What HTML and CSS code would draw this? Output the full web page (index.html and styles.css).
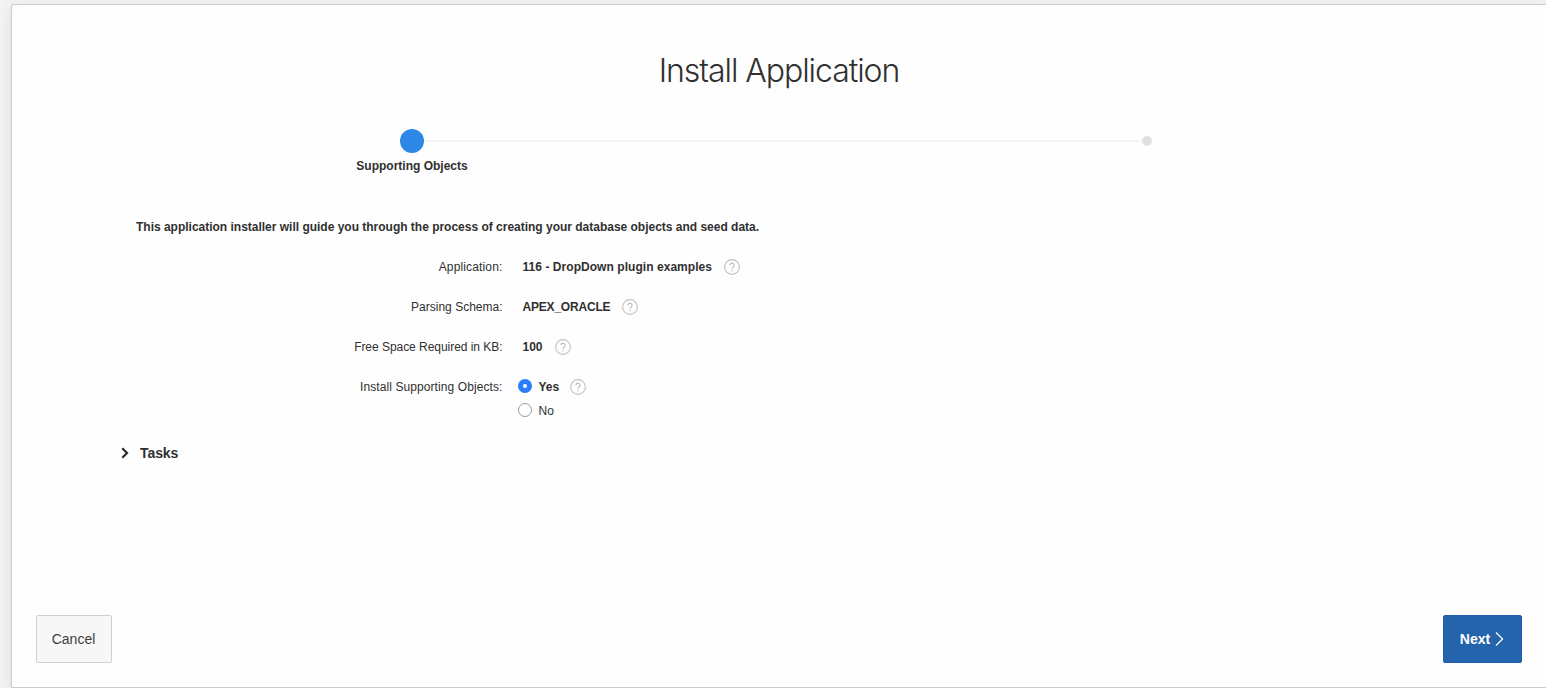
FILE: index.html
```html
<!DOCTYPE html>
<html lang="en">
<head>
<meta charset="utf-8">
<title>Install Application</title>
<link rel="stylesheet" href="styles.css">
</head>
<body>
<svg class="sprite" aria-hidden="true">
  <symbol id="help" viewBox="0 0 16 16">
    <circle cx="8" cy="8" r="7.4" fill="none" stroke="#c2c2c2" stroke-width="1.1"/>
    <path d="M5.9 6.2a2.1 2.1 0 1 1 3.400 1.700C8.500 8.500 8 8.900 8 9.900" fill="none" stroke="#b8b8b8" stroke-width="1.100"/>
    <circle cx="8" cy="11.700" r=".7" fill="#b8b8b8"/>
  </symbol>
</svg>
<main class="wizard">
  <h1 class="wizard-title"><span>Install Application</span></h1>
  <ol class="progress">
    <li class="step step-current"><span class="marker"></span><span class="step-label">Supporting Objects</span></li>
    <li class="track"></li>
    <li class="step step-next"><span class="marker"></span></li>
  </ol>
  <section class="content">
    <p class="intro"><b>This application installer will guide you through the process of creating your database objects and seed data.</b></p>
    <div class="row"><span class="label label-app">Application:</span><span class="value"><b class="v-app">116 - DropDown plugin examples</b><svg class="help"><use href="#help"/></svg></span></div>
    <div class="row"><span class="label">Parsing Schema:</span><span class="value"><b class="v-schema">APEX_ORACLE</b><svg class="help"><use href="#help"/></svg></span></div>
    <div class="row"><span class="label label-space">Free Space Required in KB:</span><span class="value"><b>100</b><svg class="help"><use href="#help"/></svg></span></div>
    <div class="row"><span class="label label-objects">Install Supporting Objects:</span><span class="value options"><i class="radio checked"></i><b>Yes</b><svg class="help"><use href="#help"/></svg></span></div>
    <div class="row row-no"><span class="label"></span><span class="value options"><i class="radio"></i><span>No</span></span></div>
    <h2 class="tasks"><svg class="chevron" viewBox="0 0 8 12"><path d="M1.300 1.300 6 6 1.300 10.700" fill="none" stroke="#2b2b2b" stroke-width="2.200"/></svg><span>Tasks</span></h2>
  </section>
  <footer class="buttons">
    <button class="btn">Cancel</button>
    <button class="btn btn-next"><span>Next</span><svg class="arrow" viewBox="0 0 9 16"><path d="M1 1.500 7.600 8 1 14.500" fill="none" stroke="#fff" stroke-width="1.200"/></svg></button>
  </footer>
</main>
</body>
</html>
```
FILE: styles.css
```css
* { box-sizing: border-box; }
body {
  margin: 0;
  height: 688px;
  overflow: hidden;
  background: #f4f4f4;
  padding: 4px 0 0 11px;
  font: 12px/16px "Liberation Sans", Arial, sans-serif;
  color: #303030;
}
.sprite { position: absolute; width: 0; height: 0; }
.wizard {
  height: 684px;
  background: #fefefe;
  border: 1px solid #cbcbcb;
  border-right: 0;
  border-radius: 2px 0 0 2px;
  box-shadow: 0 4px 16px rgba(0, 0, 0, .1);
  display: flex;
  flex-direction: column;
}
.wizard-title {
  margin: 46px 0 0;
  height: 40px;
  text-align: center;
  font: 300 32px/40px Inter, sans-serif;
  letter-spacing: -1.05px;
}
.progress {
  list-style: none;
  margin: 38px 0 0 344px;
  padding: 0;
  display: flex;
  width: 796px;
  height: 48px;
}
.step-current {
  width: 112px;
  display: flex;
  flex-direction: column;
  align-items: center;
}
.step-current .marker { width: 24px; height: 24px; border-radius: 50%; background: #2e86e6; flex: none; }
.step-label { margin-top: 5px; font-weight: bold; white-space: nowrap; }
.track { flex: 1; height: 2px; margin: 11px 0 0 -44px; background: #f4f4f4; }
.step-next { width: 10px; padding-top: 7px; }
.step-next .marker { display: block; width: 10px; height: 10px; border-radius: 50%; background: #e0e0e0; }
.content { flex: 1; padding: 42px 0 0 110px; }
.intro { margin: 0 0 0 14px; height: 16px; letter-spacing: -.01px; }
.row { display: flex; align-items: center; height: 16px; margin-top: 24px; }
.label { width: 380.500px; text-align: right; }
.label-app { letter-spacing: .15px; }
.label-space { letter-spacing: -.04px; }
.label-objects { letter-spacing: .09px; }
.v-app { letter-spacing: .05px; }
.v-schema { letter-spacing: -.2px; }
.value { display: flex; align-items: center; margin-left: 20px; }
.help { width: 16px; height: 16px; margin-left: 12px; }
.options { margin-left: 15.500px; }
.options .help { margin-left: 11px; }
.radio { width: 14px; height: 14px; margin: -2px 6.500px 0 0; border: 1px solid #9a9a9a; border-radius: 50%; background: #fff; }
.radio.checked { border: 5px solid #2a7dfa; }
.row-no { margin-top: 8px; }
.tasks { display: flex; align-items: center; margin: 25px 0 0 -1px; font-size: 14px; line-height: 18px; }
.chevron { width: 8px; height: 12px; margin-right: 11px; }
.tasks span { letter-spacing: -.08px; }
.buttons { display: flex; justify-content: space-between; padding: 0 24px; height: 72px; }
.btn {
  height: 48px;
  width: 76px;
  padding: 0 1px 0 0;
  border: 1px solid #cfcfcf;
  border-radius: 2px;
  background: #f7f7f7;
  color: #404040;
  font: 14px/16px "Liberation Sans", Arial, sans-serif;
}
.btn-next {
  width: 79px;
  display: flex;
  align-items: center;
  justify-content: center;
  border-color: #215fa8;
  background: #2464ad;
  color: #fff;
  font-weight: bold;
}
.arrow { width: 9px; height: 16px; margin-left: 5px; }
```
